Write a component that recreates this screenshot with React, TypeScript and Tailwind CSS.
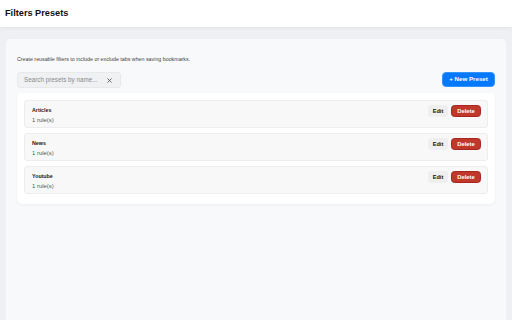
import { X } from "lucide-react";

const presets = [
    { id: "1", name: "Articles", rules: 1 },
    { id: "2", name: "News", rules: 1 },
    { id: "3", name: "Youtube", rules: 1 },
];

function PresetRow(props: { name: string; rules: number }) {
    return (
        <div className="flex h-[28px] items-start justify-between rounded-[3px] border border-[#ededed] bg-[#f8f8f8] pl-[7px] pr-[6px] pt-[4px]">
            <div className="flex flex-col pt-[2px]">
                <span className="text-[5.3px] leading-[7px] font-bold text-[#222]">{props.name}</span>
                <span className="mt-[3px] text-[5.9px] leading-[7px] text-[#555]">{props.rules} rule(s)</span>
            </div>
            <div className="flex items-center gap-[3px]">
                <button className="h-[12px] w-[20px] rounded-[3px] bg-[#efefef] text-[5.6px] font-bold text-[#111]">
                    Edit
                </button>
                <button className="h-[12px] w-[30px] rounded-[3.5px] border border-[#a8271d] bg-[#c0372b] text-[5.9px] font-bold text-white">
                    Delete
                </button>
            </div>
        </div>
    );
}

export default function App() {
    return (
        <div className="flex h-[320px] w-[512px] flex-col overflow-hidden bg-[#eef0f4] font-['Liberation_Sans',Arial,sans-serif]">
            <header className="flex h-[27px] shrink-0 items-center bg-white px-[5px] shadow-[0_1px_4px_rgba(0,0,0,0.06)]">
                <h1 className="text-[9.2px] font-bold text-[#111]">Filters Presets</h1>
            </header>
            <main className="flex-1 px-[6px] pt-[12px]">
                <div className="h-full rounded-t-[5px] bg-[#f8f9fb] px-[11px] pt-[17px]">
                    <p className="text-[5.3px] leading-[6px] text-[#444]">
                        Create reusable filters to include or exclude tabs when saving bookmarks.
                    </p>
                    <div className="mt-[10px] flex items-center justify-between">
                        <div className="flex h-[16px] w-[104px] items-center justify-between rounded-[3px] border border-[#e8e9eb] bg-[#f0f1f3] pl-[6px] pr-[7px]">
                            <span className="text-[6.3px] text-[#8a8a8a]">Search presets by name...</span>
                            <X className="h-[7px] w-[7px] text-[#555]" strokeWidth={3} />
                        </div>
                        <button className="-mt-[2px] h-[15px] w-[53px] rounded-[4px] border border-[#3393ff] bg-[#0479fd] text-[6.2px] font-bold text-white">
                            + New Preset
                        </button>
                    </div>
                    <div className="mt-[5px] flex flex-col gap-[5px] rounded-[5px] bg-white px-[7px] pt-[7px] pb-[10px] shadow-[0_1px_3px_rgba(0,0,0,0.05)]">
                        {presets.map((p) => (
                            <PresetRow key={p.id} name={p.name} rules={p.rules} />
                        ))}
                    </div>
                </div>
            </main>
        </div>
    );
}
